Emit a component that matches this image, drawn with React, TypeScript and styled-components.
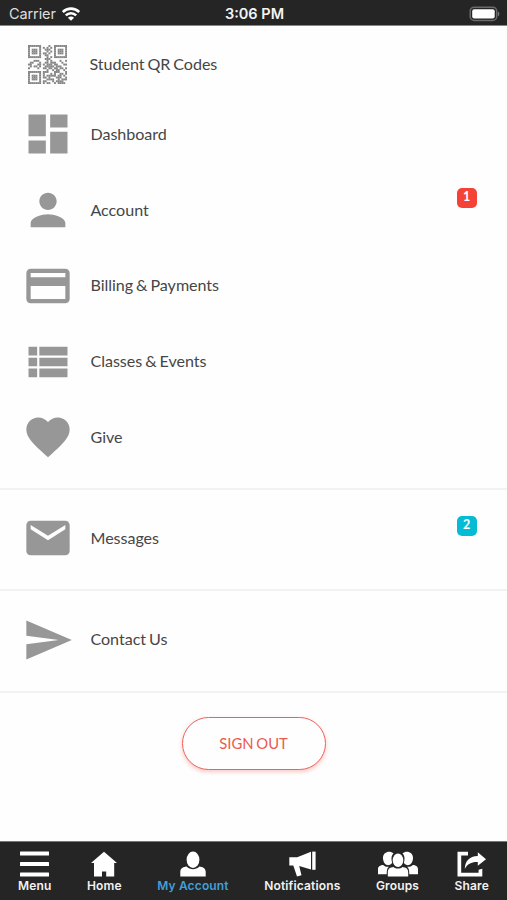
import React from 'react';
import styled, { createGlobalStyle } from 'styled-components';

const GlobalStyle = createGlobalStyle`
  *, *::before, *::after { box-sizing: border-box; }
  body { margin: 0; background: #fefefe; }
`;

const Screen = styled.div`
  width: 507px;
  height: 900px;
  display: flex;
  flex-direction: column;
  background: #fefefe;
  font-family: Lato, sans-serif;
  overflow: hidden;
`;

const StatusBar = styled.header`
  display: grid;
  grid-template-columns: 1fr auto 1fr;
  align-items: center;
  height: 26px;
  padding: 1px 7px 0 9px;
  background: #252525;
  border-bottom: 1px solid #868686;
  color: #f4f4f4;
  font: 400 14.5px/24px Inter, sans-serif;
`;

const Carrier = styled.div`
  display: flex;
  align-items: center;
  gap: 6px;
  color: #dedede;
  letter-spacing: -0.1px;
`;

const Clock = styled.div`
  padding-top: 1px;
  font-weight: 600;
  font-size: 14.5px;
`;

const Battery = styled.div`
  display: flex;
  justify-content: flex-end;
`;

const Menu = styled.main`
  flex: 1;
  display: flex;
  flex-direction: column;
`;

const Section = styled.nav<{ $first?: boolean }>`
  border-bottom: 2px solid #f1f2f2;
  padding: ${(p) => (p.$first ? '7px 0 12.8px' : '10.6px 0 13px')};
`;

const Row = styled.a<{ $compact?: boolean }>`
  display: flex;
  align-items: center;
  height: ${(p) => (p.$compact ? '63.4px' : '75.75px')};
  padding: 0 30.5px 0 21.6px;
  color: #464646;
`;

const IconSlot = styled.span`
  display: flex;
  justify-content: center;
  width: 52px;
  color: #979797;
  svg { display: block; }
`;

const Label = styled.span<{ $shift?: number }>`
  flex: 1;
  margin-left: ${(p) => 16.9 - (p.$shift ?? 0)}px;
  font-size: 16.1px;
  line-height: 24px;
  letter-spacing: -0.04px;
  word-spacing: -1.1px;
  padding-bottom: 1px;
`;

const Badge = styled.span<{ $color: string }>`
  align-self: flex-start;
  width: 20px;
  height: 20px;
  margin-top: 15.4px;
  border-radius: 5px;
  background: ${(p) => p.$color};
  color: #fff;
  font-weight: 700;
  font-size: 12.5px;
  line-height: 18.5px;
  text-align: center;
`;

const SignOut = styled.button`
  align-self: center;
  width: 144px;
  height: 53px;
  margin-top: 24px;
  border: 1.5px solid #ed625a;
  border-radius: 27px;
  background: #fefefe;
  color: #ea5a50;
  font: 400 14.8px/20px Lato, sans-serif;
  letter-spacing: -0.05px;
  word-spacing: -0.8px;
  box-shadow: 0 2px 4px rgba(240, 75, 65, 0.3);
`;

const TabBar = styled.footer`
  display: flex;
  justify-content: space-between;
  height: 59px;
  padding: 9px 18px 0;
  background: #252525;
  border-top: 1px solid #777;
`;

const Tab = styled.a<{ $active?: boolean }>`
  display: flex;
  flex-direction: column;
  align-items: center;
  color: ${(p) => (p.$active ? '#419fd9' : '#f2f2f2')};
  font: 600 12px/16px Inter, sans-serif;
  letter-spacing: 0.15px;
  svg { display: block; color: #fff; margin-bottom: 1px; }
`;

const Glyph = ({ d }: { d: string }) => (
  <svg width="52" height="52" viewBox="0 0 24 24" fill="currentColor">
    <path d={d} />
  </svg>
);

const QR_ROWS = [
  '111111100001001111111',
  '100000101010101000001',
  '101110100111001011101',
  '101110100010101011101',
  '101110101101001011101',
  '100000100110001000001',
  '111111100010101111111',
  '000000000111000000000',
  '000111000010100001001',
  '011000100110111000100',
  '110001101011101100011',
  '010110100111110111000',
  '100001001101101101101',
  '000000000010010110010',
  '111111101110001110001',
  '100000101000101001101',
  '101110101011111011010',
  '101110101101000111001',
  '101110100011110010111',
  '100000101100010111100',
  '111111101011001011110',
];

const QrIcon = () => (
  <svg width="39" height="39" viewBox="0 0 21 21" fill="#858585">
    {QR_ROWS.flatMap((row, y) =>
      [...row].map((cell, x) =>
        cell === '1' ? <rect key={`${x}-${y}`} x={x} y={y} width="1.05" height="1.05" /> : null,
      ),
    )}
  </svg>
);

const icons = {
  dashboard: 'M3 13h8V3H3v10zm0 8h8v-6H3v6zm10 0h8V11h-8v10zm0-18v6h8V3h-8z',
  account:
    'M12 12c2.21 0 4-1.79 4-4s-1.79-4-4-4-4 1.79-4 4 1.79 4 4 4zm0 2c-2.67 0-8 1.34-8 4v2h16v-2c0-2.66-5.33-4-8-4z',
  billing:
    'M20 4H4c-1.11 0-1.99.89-1.99 2L2 18c0 1.11.89 2 2 2h16c1.11 0 2-.89 2-2V6c0-1.11-.89-2-2-2zm0 14H4v-6h16v6zm0-10H4V6h16v2z',
  classes:
    'M3 14h4v-4H3v4zm0 5h4v-4H3v4zM3 9h4V5H3v4zm5 5h13v-4H8v4zm0 5h13v-4H8v4zM8 5v4h13V5H8z',
  give:
    'M12 21.35l-1.45-1.32C5.4 15.36 2 12.28 2 8.5 2 5.42 4.42 3 7.5 3c1.74 0 3.41.81 4.5 2.09C13.09 3.81 14.76 3 16.5 3 19.58 3 22 5.42 22 8.5c0 3.78-3.4 6.86-8.55 11.54L12 21.35z',
  messages:
    'M20 4H4c-1.1 0-1.99.9-1.99 2L2 18c0 1.1.9 2 2 2h16c1.1 0 2-.9 2-2V6c0-1.1-.9-2-2-2zm0 4l-8 5-8-5V6l8 5 8-5v2z',
  contact: 'M2 21l21-9L2 3v7l15 2-15 2v7z',
};

const WifiIcon = () => (
  <svg width="18" height="14" viewBox="0 0 18 14" fill="none" stroke="#fff" strokeWidth="2.6">
    <path d="M0.8 5.1C5.4 0.5 12.6 0.5 17.2 5.1" />
    <path d="M3.8 8.4c2.9-2.9 7.5-2.9 10.4 0" />
    <path d="M9 13.8 5.9 10.8c1.7-1.6 4.5-1.6 6.2 0z" fill="#fff" stroke="none" />
  </svg>
);

const BatteryIcon = () => (
  <svg width="31" height="16" viewBox="0 0 31 16">
    <rect x="1.2" y="1.2" width="26.5" height="13.2" rx="4" fill="#252525" stroke="#6a6a6a" strokeWidth="1.5" />
    <rect x="3.2" y="3.2" width="22.5" height="9.3" rx="2" fill="#fff" />
    <path d="M28.9 5.4c2 .8 2 4 0 4.8z" fill="#777" />
  </svg>
);

const MenuIcon = () => (
  <svg width="29" height="26" viewBox="0 0 29 26" fill="currentColor">
    <rect y="0.5" width="29" height="4" rx="0.5" />
    <rect y="11" width="29" height="4" rx="0.5" />
    <rect y="21.4" width="29" height="4" rx="0.5" />
  </svg>
);

const HomeIcon = () => (
  <svg width="26" height="26" viewBox="0 0 26 26" fill="currentColor">
    <path d="M13 0.8 26 12H23.2V25.5H15.2V20.5H11V25.5H3V12H0Z" />
  </svg>
);

const PersonIcon = () => (
  <svg width="26" height="26" viewBox="0 0 26 26" fill="currentColor">
    <ellipse cx="13" cy="8.7" rx="6.4" ry="8.2" />
    <path d="M0.3 25.4V21c0-3.7 3.3-5.2 6.3-5.4 3.5 3.6 9.3 3.6 12.8 0 3 .2 6.3 1.7 6.3 5.4v4.4z" />
  </svg>
);

const MegaphoneIcon = () => (
  <svg width="27" height="26" viewBox="0 0 27 26" fill="currentColor">
    <path d="M0.3 6.3H8.2L22 0.8V18.4L10.2 15 12.5 24.3 8 25.5 4.3 14.6H0.3Z" />
    <path d="M23.2 0.6h3.4v18.2h-3.4z" />
  </svg>
);

const GroupsIcon = () => (
  <svg width="40" height="26" viewBox="0 0 40 26" fill="currentColor">
    <path d="M15.5 2.3C11.5-1.2 4.7 1 5 7.3c.1 3.1 1.8 6.3 4.2 6.8 2 .4 4-.9 5-2.3-1.2-3.7-1-7.1 1.3-9.5z" />
    <path d="M24.5 2.3C28.5-1.2 35.3 1 35 7.3c-.1 3.1-1.8 6.3-4.2 6.8-2 .4-4-.9-5-2.3 1.2-3.7 1-7.1-1.3-9.5z" />
    <path d="M0 23.3v-5.2c0-2.9 2.5-4 5.1-4.2 1.6 1.7 4.3 2.2 5.8 1.8-1.9 1.5-2.2 3.7-2.2 7.6z" />
    <path d="M40 23.3v-5.2c0-2.9-2.5-4-5.1-4.2-1.6 1.7-4.3 2.2-5.8 1.8 1.9 1.5 2.2 3.7 2.2 7.6z" />
    <ellipse cx="20" cy="9.3" rx="5.3" ry="6.7" />
    <path d="M9.8 25.4v-4.2c0-3.6 2.6-4.9 5.7-5.2 2.3 2 6.7 2 9 0 3.1.3 5.7 1.6 5.7 5.2v4.2z" />
  </svg>
);

const ShareIcon = () => (
  <svg width="29" height="26" viewBox="0 0 29 26" fill="currentColor">
    <path d="M11 0.8H0.5V25.4H25.3V17.8L21.6 18.7V21.8H4.2V4.4H11Z" />
    <path d="M20.8 1.3 29 8.2l-8.2 6.6v-3.7c-6-.3-10.3 1.7-13 6.8.2-7.8 4.4-12.8 13-13z" />
  </svg>
);

const accountItems = [
  { label: 'Dashboard', icon: icons.dashboard },
  { label: 'Account', icon: icons.account, badge: '1' },
  { label: 'Billing & Payments', icon: icons.billing },
  { label: 'Classes & Events', icon: icons.classes },
  { label: 'Give', icon: icons.give },
];

const tabs = [
  { label: 'Menu', Icon: MenuIcon },
  { label: 'Home', Icon: HomeIcon },
  { label: 'My Account', Icon: PersonIcon, active: true },
  { label: 'Notifications', Icon: MegaphoneIcon },
  { label: 'Groups', Icon: GroupsIcon },
  { label: 'Share', Icon: ShareIcon },
];

export default function App() {
  return (
    <Screen>
      <GlobalStyle />
      <StatusBar>
        <Carrier>
          Carrier <WifiIcon />
        </Carrier>
        <Clock>3:06 PM</Clock>
        <Battery>
          <BatteryIcon />
        </Battery>
      </StatusBar>
      <Menu>
        <Section $first>
          <Row $compact>
            <IconSlot>
              <QrIcon />
            </IconSlot>
            <Label $shift={1}>Student QR Codes</Label>
          </Row>
          {accountItems.map((item) => (
            <Row key={item.label}>
              <IconSlot>
                <Glyph d={item.icon} />
              </IconSlot>
              <Label>{item.label}</Label>
              {item.badge && <Badge $color="#f44336">{item.badge}</Badge>}
            </Row>
          ))}
        </Section>
        <Section>
          <Row>
            <IconSlot>
              <Glyph d={icons.messages} />
            </IconSlot>
            <Label>Messages</Label>
            <Badge $color="#05bcd4">2</Badge>
          </Row>
        </Section>
        <Section>
          <Row>
            <IconSlot>
              <Glyph d={icons.contact} />
            </IconSlot>
            <Label>Contact Us</Label>
          </Row>
        </Section>
        <SignOut>SIGN OUT</SignOut>
      </Menu>
      <TabBar>
        {tabs.map(({ label, Icon, active }) => (
          <Tab key={label} $active={active}>
            <Icon />
            {label}
          </Tab>
        ))}
      </TabBar>
    </Screen>
  );
}
